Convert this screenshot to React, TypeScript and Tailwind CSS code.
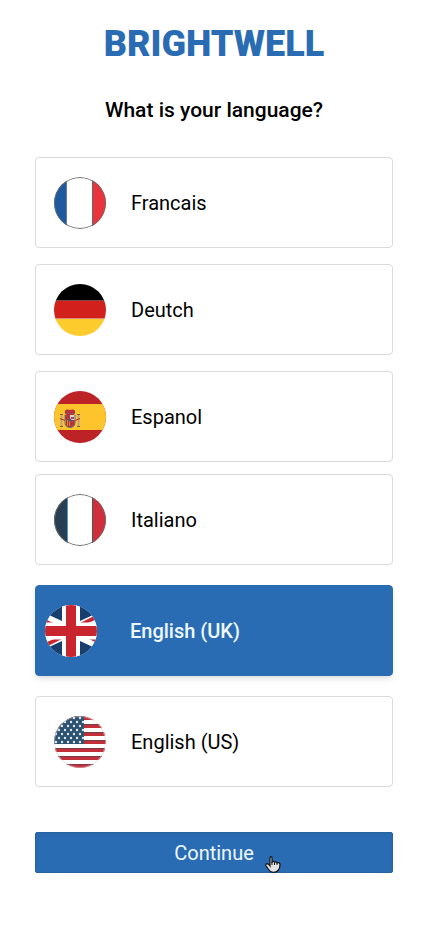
import React, { useState } from "react";
import { cva } from "class-variance-authority";

const FranceFlag = () => (
  <>
    <rect width="52" height="52" fill="#fff" />
    <rect width="12" height="52" fill="#1f5a9e" />
    <rect x="12" width="1" height="52" fill="#5c7f9c" />
    <rect x="38" width="1" height="52" fill="#666" />
    <rect x="39" width="13" height="52" fill="#e8343a" />
    <circle cx="26" cy="26" r="25.5" fill="none" stroke="#6b6b6b" />
  </>
);

const GermanyFlag = () => (
  <>
    <rect width="52" height="17" fill="#000" />
    <rect y="17" width="52" height="18" fill="#d2201c" />
    <rect y="35" width="52" height="17" fill="#fdcb2b" />
    <path d="M2 16.5h48" stroke="#7a4a48" />
    <path d="M2 34.5h48" stroke="#d98a7c" />
  </>
);

const SpainFlag = () => (
  <>
    <rect width="52" height="52" fill="#bd2226" />
    <rect y="13" width="52" height="26" fill="#fdc52b" />
    {/* Pillars */}
    <path d="M7.5 24v11M24.5 24v11" stroke="#b9a08c" strokeWidth="2" />
    <path d="M6 23.5h3M23 23.5h3M6 35.5h3M23 35.5h3" stroke="#7d6048" />
    <path d="M6 27.5l5 2M26 27.5l-5 2" stroke="#bd2226" />
    {/* Crown */}
    <path d="M11 22c-1-4 3-4 5-3 2-1 6-1 5 3l-1 2h-8z" fill="#b5333a" />
    <path d="M12 22.5h8" stroke="#66757d" strokeDasharray="1 1" />
    {/* Shield */}
    <path d="M11 24h10v8c0 6-10 6-10 0z" fill="#b5333a" />
    <path d="M16 24h5v5h-5z" fill="#ddd0d0" />
    <path d="M17 26h3v2h-3z" fill="#a54a68" />
    <path d="M11 29h5v6c-3 0-5-1-5-3z" fill="#d98b2b" />
    <path d="M12.5 29v5M14.5 29v6" stroke="#b5333a" />
    <circle cx="16" cy="29" r="1.5" fill="#40627c" />
    <path d="M11 24v8c0 6 10 6 10 0v-8" fill="none" stroke="#66757d" />
  </>
);

const ItalyFlag = () => (
  <>
    <rect width="52" height="52" fill="#fff" />
    <rect width="13" height="52" fill="#263f52" />
    <rect x="13" width="1" height="52" fill="#5595c4" />
    <rect x="38" width="1" height="52" fill="#555" />
    <rect x="39" width="13" height="52" fill="#cf2f3b" />
    <circle cx="26" cy="26" r="25.5" fill="none" stroke="#6b6b6b" />
  </>
);

const UnitedKingdomFlag = () => (
  <>
    <rect width="52" height="52" fill="#fff" />
    {/* Blue fields */}
    <path
      d="M4 10L17 16V0H4zM48 10L35 16V0H48zM4 42L17 36V52H4zM48 42L35 36V52H48z"
      fill="#163f70"
    />
    {/* Saltire */}
    <path
      d="M35 18L48 11.500L50 15L43 18zM17 34L4 40.500L2 37L9 34zM0 14L8 18H0zM52 38L44 34H52z"
      fill="#c9252f"
    />
    <path d="M26 0v52M0 26h52" stroke="#fff" strokeWidth="17" />
    <path d="M26 0v52M0 26h52" stroke="#c9252f" strokeWidth="10" />
  </>
);

const UnitedStatesFlag = () => (
  <>
    <rect width="52" height="52" fill="#fff" />
    {[0, 8, 16, 24, 32, 40, 48].map((y) => (
      <rect key={y} y={y} width="52" height="4" fill="#c2303a" />
    ))}
    {[8, 16, 24, 32, 40, 48].map((y) => (
      <rect key={y} y={y} width="52" height="1" fill="#7d3c44" />
    ))}
    <rect width="30" height="28" fill="#2d526f" />
    {[2, 6, 10, 14, 18, 22, 26].map((y, row) =>
      [2, 8, 14, 20, 26].map((x) => (
        <circle
          key={`${x}-${y}`}
          cx={row % 2 ? x + 3 : x}
          cy={y}
          r="1.2"
          fill="#dfe8f0"
        />
      ))
    )}
    <circle cx="26" cy="26" r="25.5" fill="none" stroke="#d9c4cc" strokeWidth="0.6" />
  </>
);

const languages = [
  { id: "fr", name: "Francais", Flag: FranceFlag, spacing: "mt-0" },
  { id: "de", name: "Deutch", Flag: GermanyFlag, spacing: "mt-4" },
  { id: "es", name: "Espanol", Flag: SpainFlag, spacing: "mt-4" },
  { id: "it", name: "Italiano", Flag: ItalyFlag, spacing: "mt-3" },
  { id: "en-gb", name: "English (UK)", Flag: UnitedKingdomFlag, spacing: "mt-5" },
  { id: "en-us", name: "English (US)", Flag: UnitedStatesFlag, spacing: "mt-5" },
];

const option = cva(
  "flex h-[91px] cursor-pointer items-center rounded border text-xl has-focus-visible:outline-2",
  {
    variants: {
      selected: {
        true: "gap-[33px] border-[#2a6cb4] bg-[#2a6cb4] pl-[9px] font-medium text-[#eef8ff] shadow-md",
        false: "gap-[25px] border-[#dcdadc] bg-white pl-[18px] text-black",
      },
    },
  }
);

const PointerCursor = () => (
  <svg
    className="pointer-events-none absolute top-[23px] left-[229px]"
    width="16"
    height="17"
    viewBox="0 0 16 17"
    aria-hidden="true"
  >
    <path
      d="M5 10V2Q5 .7 6 .7T7 2V6Q8.500 4.500 9.500 6.300 11 5.200 12 7 14.800 6 15 8.500 15.200 12 13 14.500 11.500 16.300 8.500 16.300 5.500 16.300 4 14L.9 9.500Q.5 8 2 7.700 3.500 7.800 5 10Z"
      fill="#e4e4e4"
      stroke="#111"
      strokeWidth="1.200"
    />
    <path d="M7 6v3M9.500 6.500v2.500M12 7v2" stroke="#111" />
  </svg>
);

const App = () => {
  const [selected, setSelected] = useState("en-gb");

  return (
    <main className="min-h-screen bg-white pt-6 pr-[33px] pb-12 pl-[35px] font-['Roboto',sans-serif]">
      <div className="text-center text-4xl font-black text-[#2a6cb4]">
        BRIGHTWELL
      </div>

      <h1
        id="language-title"
        className="mt-8 text-center text-[21px] leading-7 font-medium text-black"
      >
        What is your language?
      </h1>

      <form className="mt-[33px]" onSubmit={(e) => e.preventDefault()}>
        <div role="radiogroup" aria-labelledby="language-title">
          {languages.map(({ id, name, Flag, spacing }) => (
            <div key={id} className={spacing}>
              <label className={option({ selected: selected === id })}>
                <input
                  type="radio"
                  name="language"
                  value={id}
                  checked={selected === id}
                  onChange={() => setSelected(id)}
                  className="sr-only"
                />
                <svg
                  className="shrink-0 rounded-full"
                  width="52"
                  height="52"
                  viewBox="0 0 52 52"
                  aria-hidden="true"
                >
                  <Flag />
                </svg>
                <span>{name}</span>
              </label>
            </div>
          ))}
        </div>

        <button
          type="submit"
          className="relative mt-[45px] h-[41px] w-full rounded-xs border border-[#2862a0] bg-[#2a6cb4] text-xl text-[#eef8ff] inset-shadow-sm"
        >
          Continue
          <PointerCursor />
        </button>
      </form>
    </main>
  );
};

export default App;
